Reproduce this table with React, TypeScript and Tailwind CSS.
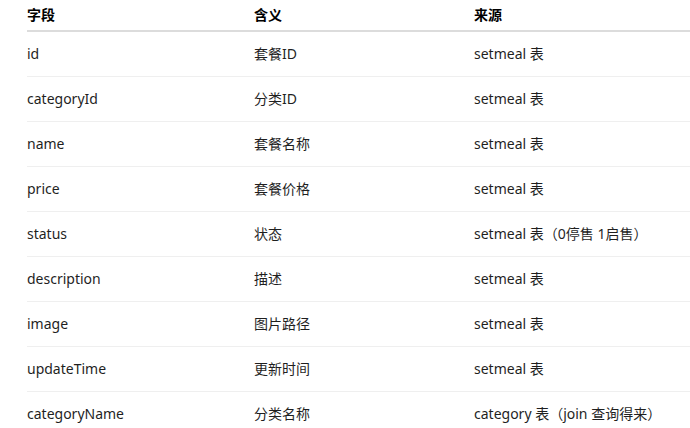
const rows: [string, string, string][] = [
  ['id', '套餐ID', 'setmeal 表'],
  ['categoryId', '分类ID', 'setmeal 表'],
  ['name', '套餐名称', 'setmeal 表'],
  ['price', '套餐价格', 'setmeal 表'],
  ['status', '状态', 'setmeal 表（0停售 1启售）'],
  ['description', '描述', 'setmeal 表'],
  ['image', '图片路径', 'setmeal 表'],
  ['updateTime', '更新时间', 'setmeal 表'],
  ['categoryName', '分类名称', 'category 表（join 查询得来）'],
]

export default function App() {
  return (
    <div
      className="w-[690px] h-[428px] overflow-hidden bg-white pl-[27px] text-[14px] text-[#1f1f1f]"
      style={{ fontFamily: '"Noto Sans", "Noto Sans CJK SC", sans-serif' }}
    >
      {/* Header */}
      <div className="grid grid-cols-[227px_220px_1fr] h-[32px] items-center border-b-2 border-[#dcdcdc] font-bold text-black pb-[2px]">
        <span>字段</span>
        <span>含义</span>
        <span>来源</span>
      </div>

      {rows.map(([field, meaning, source]) => (
        <div
          key={field}
          className="grid grid-cols-[227px_220px_1fr] h-[45px] items-center border-b border-[#efefef] pb-[2px]"
        >
          <span>{field}</span>
          <span>{meaning}</span>
          <span className="whitespace-nowrap">{source}</span>
        </div>
      ))}
    </div>
  )
}
